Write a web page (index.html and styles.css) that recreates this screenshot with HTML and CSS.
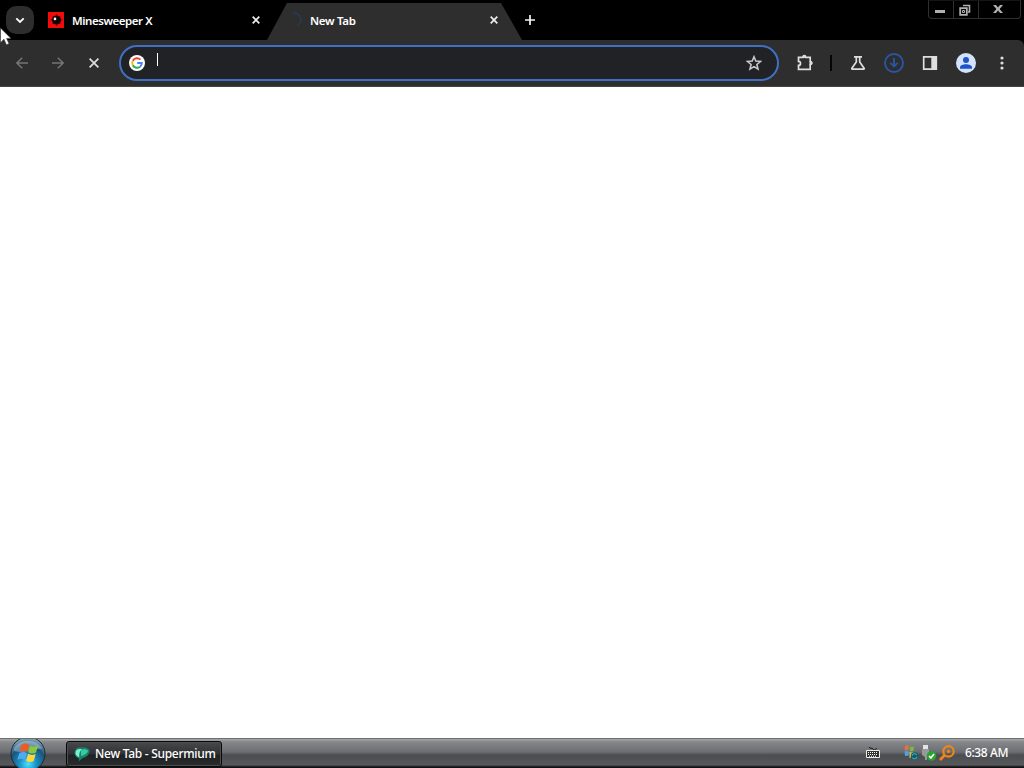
FILE: index.html
```
<!DOCTYPE html>
<html lang="en">
<head>
    <meta charset="UTF-8">
    <meta name="viewport" content="width=device-width, initial-scale=1.0">
    <title>New Tab - Supermium</title>
    <link rel="stylesheet" href="styles.css">
</head>
<body>
    <div class="browser">
        <!-- Tab strip -->
        <div class="tab-strip">
            <button class="tab-search" aria-label="Search tabs">
                <svg width="10" height="7" viewBox="0 0 10 7"><path d="M1.3 1.3 5 5l3.7-3.7" fill="none" stroke="#fff" stroke-width="1.8"/></svg>
            </button>
            <div class="tab">
                <svg class="favicon" width="16" height="16" viewBox="0 0 16 16">
                    <rect width="16" height="16" fill="#f00c0c"/>
                    <path d="M8.5 2v12M2.5 8h12M4.4 3.9l8.2 8.2M12.6 3.9l-8.2 8.2" stroke="#7a0000" stroke-width="1"/>
                    <circle cx="8.5" cy="8" r="4.6" fill="#130000"/>
                    <circle cx="7" cy="6.9" r="1.3" fill="#fff"/>
                </svg>
                <span class="tab-title minesweeper">Minesweeper X</span>
                <svg class="close" width="8" height="8" viewBox="0 0 8 8"><path d="M.7.7l6.6 6.6M7.3.7.7 7.3"/></svg>
            </div>
            <div class="tab active">
                <svg class="favicon" width="16" height="16" viewBox="0 0 16 16"><path d="M7 1.2a6.8 6.8 0 0 1 4 12.8" fill="none" stroke="#293a52" stroke-width="1.6"/></svg>
                <span class="tab-title">New Tab</span>
                <svg class="close" width="8" height="8" viewBox="0 0 8 8"><path d="M.7.7l6.6 6.6M7.3.7.7 7.3"/></svg>
            </div>
            <button class="new-tab" aria-label="New tab">
                <svg width="10" height="10" viewBox="0 0 10 10"><path d="M5 0v10M0 5h10" stroke="#f4f4f4" stroke-width="1.7"/></svg>
            </button>
            <div class="window-controls">
                <span class="minimize"><svg width="10" height="3" viewBox="0 0 10 3"><path d="M0 0h10v3H0z" fill="#b0b0b0"/></svg></span>
                <span class="restore">
                    <svg width="12" height="12" viewBox="0 0 12 12" fill="none" stroke="#b0b0b0"><path d="M4 1.5h6.5V8H9" stroke-width="1.6"/><path d="M1.2 4.2h6.6v6.6H1.2z" stroke-width="1.8"/><path d="M3.5 6.5h2v2h-2z"/></svg>
                </span>
                <span class="quit"><svg width="10" height="8" viewBox="0 0 10 8"><path d="M0 0h3l2 2.4L7 0h3L6.6 4 10 8H7L5 5.6 3 8H0l3.4-4z" fill="#b0b0b0"/></svg></span>
            </div>
        </div>

        <!-- Toolbar -->
        <div class="toolbar">
            <span class="icon dim"><svg width="12" height="12" viewBox="0 0 12 12"><path d="M12 6H1M6.2.7.9 6l5.3 5.3"/></svg></span>
            <span class="icon dim"><svg width="12" height="12" viewBox="0 0 12 12"><path d="M0 6h11M5.8.7 11.1 6l-5.3 5.3"/></svg></span>
            <span class="icon"><svg width="10" height="10" viewBox="0 0 10 10"><path d="M.6.6l8.8 8.8M9.4.6.6 9.4"/></svg></span>
            <div class="omnibox">
                <svg class="google" width="16" height="16" viewBox="0 0 16 16">
                    <circle cx="8" cy="8" r="8" fill="#fff"/>
                    <g fill="none" stroke-width="2">
                        <path d="M11.4 4.6A4.8 4.8 0 0 0 3.8 5.7" stroke="#ea4335"/>
                        <path d="M3.8 5.7a4.8 4.8 0 0 0 0 4.6" stroke="#fbbc05"/>
                        <path d="M3.8 10.3a4.8 4.8 0 0 0 7.2 1.4" stroke="#34a853"/>
                        <path d="M11 11.7A4.8 4.8 0 0 0 12.8 8H8.2" stroke="#4285f4"/>
                    </g>
                </svg>
                <span class="caret"></span>
                <svg class="star" width="16" height="16" viewBox="0 0 16 16"><path d="M8 1.8l1.8 4.3 4.7.4-3.6 3 1.1 4.6L8 11.6l-4 2.5 1.1-4.6-3.6-3 4.7-.4z" fill="none" stroke="#c7c7c7" stroke-width="1.6"/></svg>
            </div>
            <span class="icon extensions"><svg width="18" height="18" viewBox="0 0 18 18"><path d="M2.5 3.4h4.6a1.3 1.2 0 0 1 2.4 0h4.7v4.2a1.4 1.4 0 0 1 0 2.8v5H2.5v-4a2 2 0 0 0 0-4z"/><path d="M7 3a1.3 1.3 0 0 1 2.6 0zM14.5 7.8a1.3 1.3 0 0 1 0 2.6z" fill="#dedede"/></svg></span>
            <span class="divider"></span>
            <span class="icon flask"><svg width="16" height="16" viewBox="0 0 16 16"><path d="M4 1.8h8M6.3 2v5l-4.4 6.2c-.3.5-.1 1 .5 1h11.2c.6 0 .8-.5.5-1L9.7 7V2"/></svg></span>
            <span class="icon download"><svg width="20" height="20" viewBox="0 0 20 20"><circle cx="10" cy="10" r="9"/><path d="M10 5v9M6.3 9.8l3.7 3.7 3.7-3.7"/></svg></span>
            <span class="icon"><svg width="16" height="16" viewBox="0 0 16 16"><path d="M1.7 1.9h12.6v12.2H1.7z"/><path d="M9.3 1.5h5v13h-5z" fill="#dedede" stroke="none"/></svg></span>
            <span class="icon">
                <svg width="20" height="20" viewBox="0 0 20 20"><g stroke="none"><circle cx="10" cy="10" r="10" fill="#d3e3fd"/><circle cx="10" cy="6.9" r="3" fill="#1b55c8"/><path d="M4 15.8v-1.6c0-2 3.2-3 6-3s6 1 6 3v1.6z" fill="#1b55c8"/></g></svg>
            </span>
            <span class="icon"><svg width="4" height="14" viewBox="0 0 4 14"><g fill="#dedede" stroke="none"><circle cx="2" cy="2" r="1.6"/><circle cx="2" cy="7" r="1.6"/><circle cx="2" cy="12" r="1.6"/></g></svg></span>
        </div>

        <main class="page"></main>
    </div>

    <!-- Taskbar -->
    <div class="taskbar">
        <div class="start">
            <svg width="36" height="29" viewBox="0 0 36 29">
                <defs>
                    <radialGradient id="orb" cx=".5" cy=".8" r=".8">
                        <stop offset="0" stop-color="#4ce4fa"/>
                        <stop offset=".3" stop-color="#1d92c8"/>
                        <stop offset=".65" stop-color="#1b5379"/>
                        <stop offset="1" stop-color="#9bb5c2"/>
                    </radialGradient>
                </defs>
                <circle cx="18" cy="14.8" r="17" fill="url(#orb)" stroke="#182936"/>
                <path d="M4 10C9-1 27-1 32 10 25 8 15 15 4 12z" fill="#d3e6ee" opacity=".4"/>
                <path d="M11.5 5.8c3.2-2 5.6-1.2 7.6.2l-1.9 7c-2.4-1.4-4.8-1.6-7.6-.1z" fill="#f05a20"/>
                <path d="M20 6.7c2.8 1.4 5.3 1.2 8-.2L26 13.6c-2.6 1.4-5 1.3-7.8-.3z" fill="#8cc83c"/>
                <path d="M9.3 14c3-1.5 5.4-1.2 7.7.2l-1.9 6.9c-2.6-1.6-5-1.7-7.7-.2z" fill="#4faaf2"/>
                <path d="M18 14.8c2.7 1.5 5.1 1.4 7.7.1l-1.9 7c-2.6 1.5-5.1 1.3-7.7-.2z" fill="#ffd63c"/>
            </svg>
        </div>
        <div class="task">
            <svg width="16" height="16" viewBox="0 0 16 16">
                <path d="M.6 6.5C1 2 4.5.6 8 1.6c3-.9 6.6.2 7.6 3.2-.4 3.7-2.8 6.4-6.4 7-1.6 1.2-3 2.2-4.4 3.4l.1-2.7C2 11.400.3 9.400.6 6.500z" fill="#17816c"/>
                <path d="M1.500 7c0-3.500 3-4.700 6.500-3.700C6 4.500 5 7 5.200 11.400 3 10.500 1.600 9 1.500 7z" fill="#7ff0cc"/>
                <path d="M7 4.500c2-2 5.500-1.700 7.200.3-1.400 2.800-3.600 4.400-7 5.200z" fill="#39caa2"/>
            </svg>
            <span>New Tab - Supermium</span>
        </div>
        <div class="tray">
            <svg class="keyboard" width="14" height="14" viewBox="0 0 14 14"><path d="M3 1c1 2.500 3 0 4 2s3 0 4-1" fill="none" stroke="#161616"/><path d="M.5 4.500h13v7H.5z" fill="#333" stroke="#eee"/><path d="M2 6.500h10M2 8.500h10M3 10.300h8" stroke="#fff" stroke-dasharray="1 1"/></svg>
            <svg width="16" height="18" viewBox="0 0 16 18">
                <path d="M2 2c1.500-1 3-1 4 0L5 6.500C4 6 2.800 6 1.500 6.500z" fill="#e86f43"/>
                <path d="M7 2.500c1.500.6 2.600.6 4 0L10.500 7C9 7.600 8 7.400 6.500 7z" fill="#7fb44c"/>
                <path d="M1.500 7.500c1.500-.8 3-.6 4.500 0l-.5 4.500c-1-.5-2-.5-3.500 0z" fill="#4da3e6"/>
                <path d="M6.500 8c1.500.6 3 .6 4 0l1 5-5 1z" fill="#e6c83d"/>
                <circle cx="11.500" cy="12" r="3.800" fill="#12596b"/>
                <path d="M9 12a2.500 2.500 0 0 1 4.700-1M14 12.600a2.500 2.500 0 0 1-4.600 1" fill="none" stroke="#3ea8b0" stroke-width="1.200"/>
            </svg>
            <svg class="usb" width="16" height="18" viewBox="0 0 16 18"><path d="M2 1h5v4H2z" fill="#e2e5e8"/><path d="M1 5h7v6l-2 2v3H4v-3l-3-2z" fill="#969a9e"/><circle cx="10.500" cy="12" r="4.800" fill="#29a32c"/><path d="M8.100 12l1.800 2 3.100-4" fill="none" stroke="#fff" stroke-width="1.600"/></svg>
            <svg class="magnifier" width="16" height="16" viewBox="0 0 16 16"><circle cx="9.500" cy="6.400" r="5.200" fill="none" stroke="#f28418" stroke-width="2.200"/><circle cx="9.500" cy="6.400" r="1.700" fill="#f28418"/><path d="M5.800 10.100l-4.800 4.800" stroke="#f28418" stroke-width="2.800"/></svg>
            <span class="clock">6:38 AM</span>
        </div>
    </div>

    <svg class="cursor" width="12" height="20" viewBox="0 0 12 20"><path d="M.5 1v14.500L4 12.200l2.400 5.600 2.600-1.100-2.400-5.300H11z" fill="#fff" stroke="#333" stroke-width=".5"/></svg>
</body>
</html>
```
FILE: styles.css
```
* {
    margin: 0;
    padding: 0;
    box-sizing: border-box;
}

body {
    height: 100vh;
    display: flex;
    flex-direction: column;
    overflow: hidden;
    background: #fff;
    color: #fff;
    font-family: "Noto Sans", "Open Sans", sans-serif;
    font-size: 12px;
    font-weight: 500;
}

svg {
    display: block;
    flex-shrink: 0;
}

button {
    border: none;
    background: none;
}

.browser {
    flex: 1;
    display: flex;
    flex-direction: column;
}

.tab-strip {
    height: 40px;
    display: flex;
    align-items: flex-start;
    background: #000;
}

.tab-search {
    width: 28px;
    height: 28px;
    margin: 6px 0 0 6px;
    display: flex;
    align-items: center;
    justify-content: center;
    border-radius: 10px;
    background: #2d2d2d;
}

.tab {
    width: 233px;
    height: 37px;
    margin-top: 3px;
    padding: 0 7px 3px 14px;
    display: flex;
    align-items: center;
}

.tab.active {
    width: 255px;
    padding: 0 24px 3px 19px;
    background: #2e2e2e;
    clip-path: polygon(20px 0, 234px 0, 255px 100%, 0 100%);
}

.favicon {
    margin-right: 8px;
}

.tab-title {
    font-size: 11.5px;
    font-weight: 600;
    letter-spacing: -0.3px;
}

.minesweeper {
    letter-spacing: -0.45px;
}

.close {
    margin-left: auto;
    fill: none;
    stroke: #eee;
    stroke-width: 1.7;
}

.new-tab {
    width: 16px;
    height: 40px;
    display: flex;
    align-items: center;
    justify-content: center;
}

.window-controls {
    height: 19px;
    margin: 0 3px 0 auto;
    display: flex;
    border: 1px solid #303030;
    border-top-color: #151515;
    border-radius: 0 0 4px 4px;
}

.window-controls span {
    width: 25px;
    display: flex;
    align-items: center;
    justify-content: center;
    border-right: 1px solid #303030;
}

.window-controls .minimize {
    padding: 4px 2px 0 0;
}

.window-controls .restore {
    padding-right: 2px;
}

.window-controls .quit {
    width: 41px;
    padding: 0 3px 2px 0;
    border-right: none;
}

.toolbar {
    height: 47px;
    padding: 0 4px;
    display: flex;
    align-items: center;
    background: #2e2e2e;
    border-bottom: 1px solid #444;
    border-top-right-radius: 6px;
    box-shadow: 6px -6px 0 #000;
}

.icon {
    width: 36px;
    display: flex;
    justify-content: center;
    fill: none;
    stroke: #dedede;
    stroke-width: 1.7;
}

.dim {
    stroke: #747474;
    stroke-width: 1.5;
}

.omnibox {
    width: 660px;
    height: 36px;
    margin-left: 7px;
    padding: 0 15px 0 8px;
    display: flex;
    align-items: center;
    border: 2px solid #4070c4;
    border-radius: 18px;
    background: #202226;
}

.caret {
    width: 1px;
    height: 13px;
    margin: 0 0 7px 12px;
    background: #fff;
}

.star {
    margin-left: auto;
}

.extensions {
    margin-left: 8px;
}

.divider {
    width: 2px;
    height: 16px;
    margin: 0 8px 0 7px;
    background: #050505;
}

.download {
    stroke: #2a54a4;
    stroke-width: 1.9;
}

.page {
    flex: 1;
    background: #fff;
}

.taskbar {
    height: 30px;
    padding-left: 10px;
    display: flex;
    align-items: center;
    border-top: 1px solid #6c6e70;
    background: linear-gradient(#a4a6a8 0, #85878a 3px, #6c6e71 13px, #4b4d50 16px, #56585b 26px, #111 28px);
}

.start {
    width: 36px;
    height: 29px;
    margin-right: 20px;
}

.task {
    width: 156px;
    height: 26px;
    padding-left: 7px;
    display: flex;
    align-items: center;
    border: 1px solid #08090a;
    border-radius: 3px;
    background: linear-gradient(#48494b, #303133 50%, #202123 54%, #2a2b2d);
    box-shadow: inset 0 0 0 1px #4c4e50;
    white-space: nowrap;
}

.task span {
    margin-left: 5px;
    letter-spacing: -0.28px;
}

.tray {
    margin: -2px 0 0 auto;
    padding-right: 15px;
    display: flex;
    align-items: center;
}

.keyboard {
    margin-right: 23px;
}

.usb {
    margin-left: 2px;
}

.magnifier {
    margin-left: 2px;
}

.clock {
    width: 44px;
    margin-left: 10px;
    white-space: nowrap;
    letter-spacing: -0.4px;
}

/* Mouse pointer lies over the window */
.cursor {
    position: absolute;
    left: 0;
    top: 27px;
}
```
